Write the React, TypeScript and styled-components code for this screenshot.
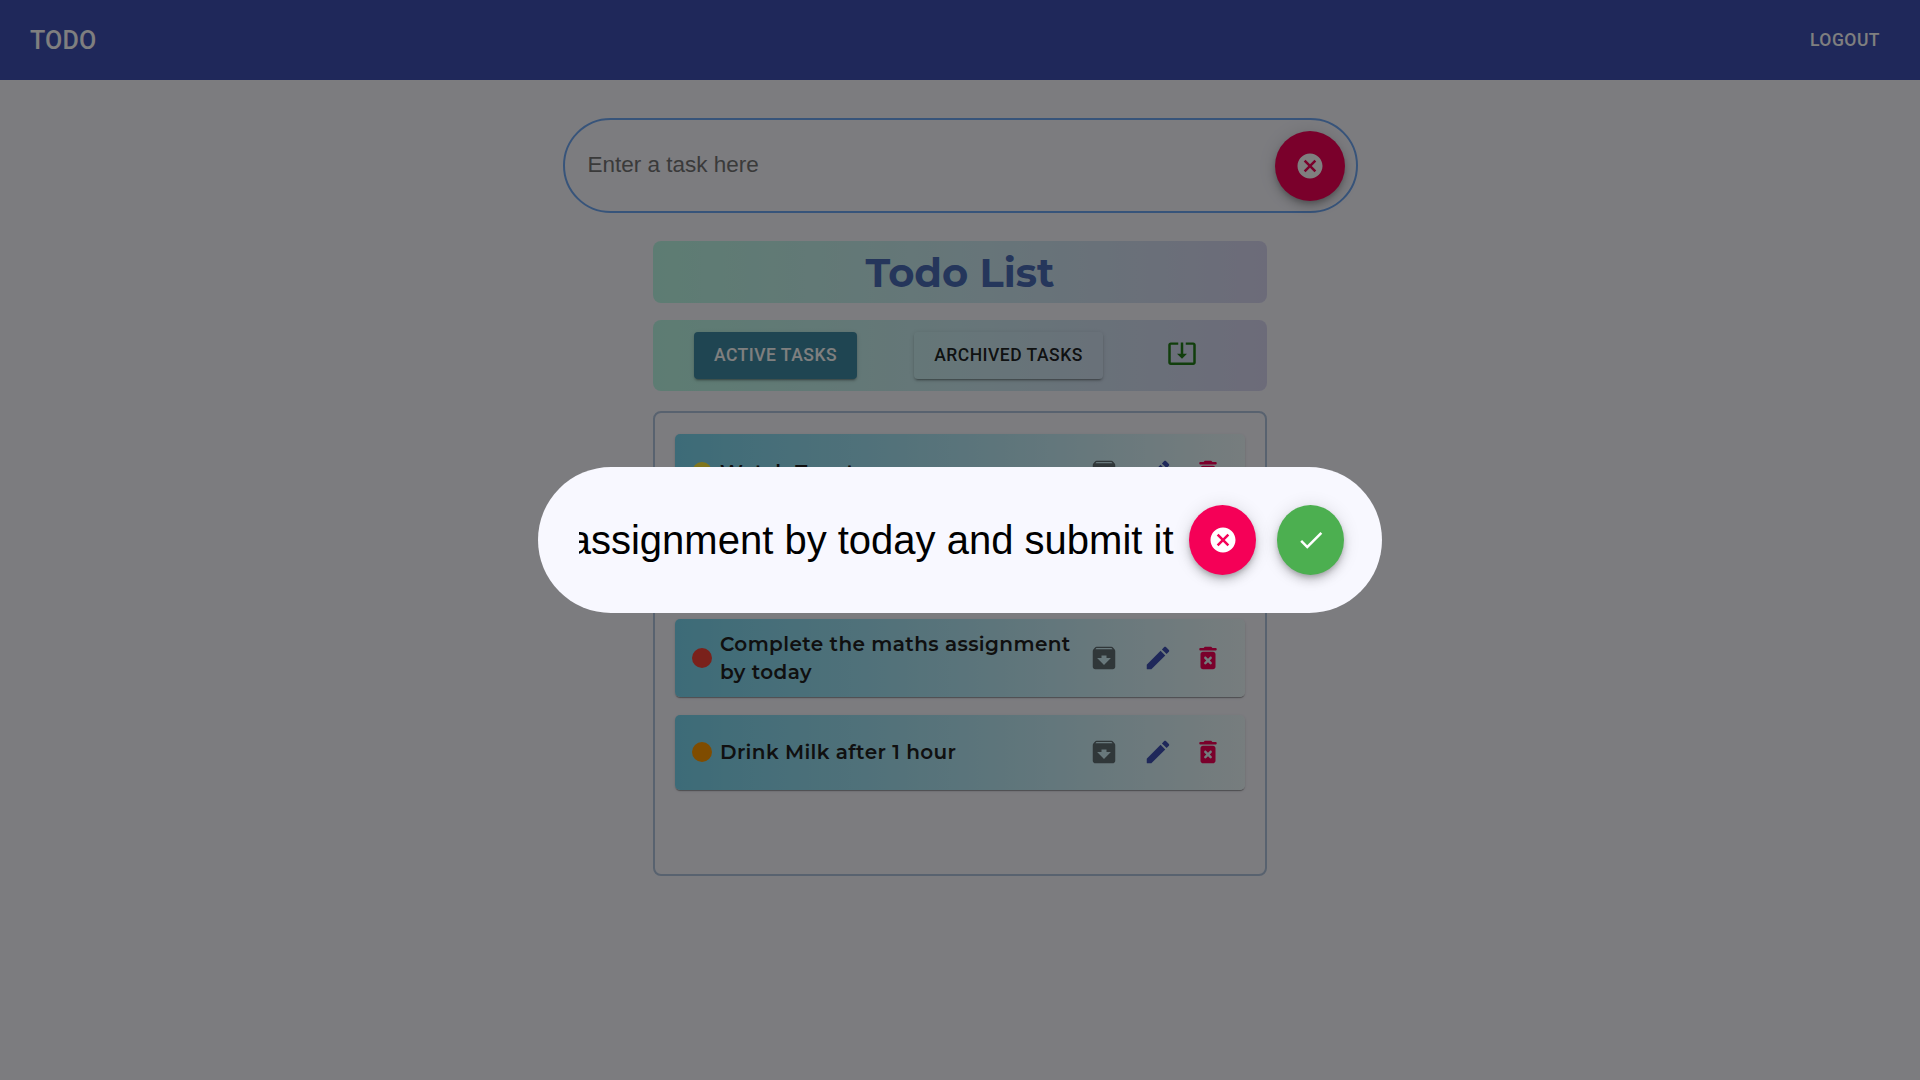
import React from "react";
import styled, { createGlobalStyle, css } from "styled-components";
import { MdArchive, MdCancel, MdCheck, MdSystemUpdateAlt } from "react-icons/md";

const GlobalStyle = createGlobalStyle`
  *, *::before, *::after { box-sizing: border-box; }
  body {
    margin: 0;
    height: 100vh;
    overflow: hidden;
    background: #f8f8ff;
    font-family: Roboto, "Liberation Sans", sans-serif;
  }
`;

const Page = styled.div`
  display: flex;
  flex-direction: column;
  align-items: center;
`;

const AppBar = styled.header`
  width: 100%;
  height: 80px;
  padding: 0 24px 0 30px;
  display: flex;
  align-items: center;
  justify-content: space-between;
  background: #3f51b5;
  color: #fff;
`;

const Brand = styled.h6`
  margin: 0;
  padding-top: 2px;
  font-size: 25px;
  font-weight: 500;
  line-height: 40px;
  letter-spacing: 0.0075em;
`;

const buttonText = css`
  font-family: Roboto, sans-serif;
  font-size: 17.5px;
  font-weight: 500;
  line-height: 30px;
  letter-spacing: 0.02857em;
  text-transform: uppercase;
  white-space: nowrap;
`;

const LogoutButton = styled.button`
  ${buttonText}
  padding: 6px 16px;
  border: 0;
  background: none;
  color: inherit;
`;

const EntryBar = styled.form`
  width: 795px;
  height: 95px;
  margin-top: 38px;
  padding: 0 11px 0 23px;
  display: flex;
  align-items: center;
  border: 2px solid #6fa8f5;
  border-radius: 50px;
`;

const EntryInput = styled.input`
  flex: 1;
  min-width: 0;
  padding: 0 0 2px;
  border: 0;
  outline: 0;
  background: transparent;
  font-family: "Liberation Sans", Arial, sans-serif;
  font-size: 22.5px;
  &::placeholder { color: #757575; }
`;

const Fab = styled.button<{ $color: string; $width?: number }>`
  flex: none;
  width: ${(p) => p.$width ?? 70}px;
  height: 70px;
  padding: 0;
  display: flex;
  align-items: center;
  justify-content: center;
  border: 0;
  border-radius: 50%;
  background: ${(p) => p.$color};
  color: #fff;
  font-size: 30px;
  box-shadow: 0 3px 5px -1px rgba(0, 0, 0, 0.2), 0 6px 10px 0 rgba(0, 0, 0, 0.14),
    0 1px 18px 0 rgba(0, 0, 0, 0.12);
`;

const gradientPanel = css`
  width: 614px;
  border-radius: 8px;
  background: linear-gradient(to right, #bbf9e6, #cdecf2 50%, #d9d7f3);
`;

const TitlePanel = styled.div`
  ${gradientPanel}
  height: 62px;
  margin-top: 28px;
  display: flex;
  align-items: center;
  justify-content: center;
`;

const Title = styled.h1`
  margin: 0;
  font-family: Montserrat, Inter, sans-serif;
  font-size: 40px;
  font-weight: 700;
  color: #4b6cb7;
`;

const TabPanel = styled.nav`
  ${gradientPanel}
  height: 71px;
  margin-top: 17px;
  padding: 0 68px 0 41px;
  display: flex;
  align-items: center;
`;

const Tab = styled.button<{ $active?: boolean }>`
  ${buttonText}
  width: ${(p) => (p.$active ? 163 : 189)}px;
  height: 47px;
  margin-right: ${(p) => (p.$active ? 57 : 64)}px;
  padding: 0 0 2px;
  border: 0;
  border-radius: 4px;
  background: ${(p) => (p.$active ? "#3e8ba5" : "transparent")};
  color: ${(p) => (p.$active ? "#fff" : "rgba(0, 0, 0, 0.87)")};
  box-shadow: 0 3px 1px -2px rgba(0, 0, 0, 0.2), 0 2px 2px 0 rgba(0, 0, 0, 0.14),
    0 1px 5px 0 rgba(0, 0, 0, 0.12);
`;

const ArchiveAll = styled.span`
  display: flex;
  padding-bottom: 6px;
  color: #237d18;
  font-size: 30px;
`;

const List = styled.ul`
  width: 614px;
  height: 465px;
  margin: 20px 0 0;
  padding: 21px 20px;
  display: flex;
  flex-direction: column;
  gap: 17.5px;
  list-style: none;
  border: 2px solid #b0c4de;
  border-radius: 8px;
`;

const Card = styled.li`
  min-height: 75px;
  padding: 11px 22px 11px 17px;
  display: flex;
  align-items: center;
  border-radius: 5px;
  background: linear-gradient(to right, #7ad7f0, #eefafc);
  box-shadow: 0 2px 1px -1px rgba(0, 0, 0, 0.2), 0 1px 1px 0 rgba(0, 0, 0, 0.14),
    0 1px 3px 0 rgba(0, 0, 0, 0.12);
`;

const Dot = styled.span<{ $color: string }>`
  flex: none;
  width: 20px;
  height: 20px;
  margin-right: 8px;
  border-radius: 50%;
  background: ${(p) => p.$color};
`;

const TaskText = styled.span`
  flex: 1;
  font-family: Montserrat, Inter, sans-serif;
  font-size: 20px;
  font-weight: 600;
  line-height: 28px;
  letter-spacing: 0.4px;
  color: #212121;
`;

const Action = styled.span<{ $color: string; $gap: number }>`
  display: flex;
  flex: none;
  margin-left: ${(p) => p.$gap}px;
  color: ${(p) => p.$color};
  font-size: 30px;
`;

const Backdrop = styled.div`
  position: fixed;
  inset: 0;
  display: flex;
  align-items: center;
  justify-content: center;
  background: rgba(0, 0, 0, 0.5);
`;

const Dialog = styled.div`
  width: 844px;
  height: 146px;
  padding: 0 38px 0 41px;
  display: flex;
  align-items: center;
  border-radius: 100px;
  background: #f8f8ff;
`;

const EditField = styled.div`
  flex: 1;
  min-width: 0;
  margin-right: 15.5px;
  display: flex;
  justify-content: flex-end;
  overflow: hidden;
  font-family: "Liberation Sans", Arial, sans-serif;
  font-size: 40px;
  line-height: 46px;
  white-space: nowrap;
  color: #000;
`;

const DialogButtons = styled.div`
  display: flex;
  gap: 21px;
`;

const Glyph = styled.svg`
  width: 1em;
  height: 1em;
  fill: currentColor;
`;

const EditIcon = () => (
  <Glyph viewBox="0 0 24 24">
    <path d="M3 17.46v3.04c0 .28.22.5.5.5h3.04c.13 0 .26-.05.35-.15L17.81 9.94l-3.75-3.75L3.15 17.1c-.1.1-.15.22-.15.36zM20.71 7.04c.39-.39.39-1.02 0-1.41l-2.34-2.34c-.39-.39-1.02-.39-1.41 0l-1.83 1.83 3.75 3.75 1.83-1.83z" />
  </Glyph>
);

const DeleteIcon = () => (
  <Glyph viewBox="0 0 24 24">
    <path d="M6 19c0 1.1.9 2 2 2h8c1.1 0 2-.9 2-2V9c0-1.1-.9-2-2-2H8c-1.1 0-2 .9-2 2v10zm3.17-7.83c.39-.39 1.02-.39 1.41 0L12 12.59l1.42-1.42c.39-.39 1.02-.39 1.41 0 .39.39.39 1.02 0 1.41L13.41 14l1.42 1.42c.39.39.39 1.02 0 1.41-.39.39-1.02.39-1.41 0L12 15.41l-1.42 1.42c-.39.39-1.02.39-1.41 0-.39-.39-.39-1.02 0-1.41L10.59 14l-1.42-1.42c-.39-.38-.39-1.02 0-1.41zM15.5 4l-.71-.71c-.18-.18-.44-.29-.7-.29H9.91c-.26 0-.52.11-.7.29L8.5 4H6c-.55 0-1 .45-1 1s.45 1 1 1h12c.55 0 1-.45 1-1s-.45-1-1-1h-2.5z" />
  </Glyph>
);

const tasks = [
  { text: "Watch Tenet", color: "#ffeb3b" },
  { text: "", color: "#f44336" },
  { text: "Complete the maths assignment by today", color: "#f44336" },
  { text: "Drink Milk after 1 hour", color: "#ff9800" },
];

export default function App() {
  return (
    <>
      <GlobalStyle />
      <Page>
        <AppBar>
          <Brand>TODO</Brand>
          <LogoutButton>Logout</LogoutButton>
        </AppBar>
        <EntryBar>
          <EntryInput placeholder="Enter a task here" />
          <Fab type="button" $color="#f50057">
            <MdCancel />
          </Fab>
        </EntryBar>
        <TitlePanel>
          <Title>Todo List</Title>
        </TitlePanel>
        <TabPanel>
          <Tab $active>Active Tasks</Tab>
          <Tab>Archived Tasks</Tab>
          <ArchiveAll>
            <MdSystemUpdateAlt />
          </ArchiveAll>
        </TabPanel>
        <List>
          {tasks.map((task, i) => (
            <Card key={i}>
              <Dot $color={task.color} />
              <TaskText>{task.text}</TaskText>
              <Action $color="#616e73" $gap={10}>
                <MdArchive />
              </Action>
              <Action $color="#3f51b5" $gap={24}>
                <EditIcon />
              </Action>
              <Action $color="#f50057" $gap={20}>
                <DeleteIcon />
              </Action>
            </Card>
          ))}
        </List>
      </Page>
      <Backdrop>
        <Dialog>
          <EditField>
            <span>Complete the maths assignment by today and submit it</span>
          </EditField>
          <DialogButtons>
            <Fab $color="#f50057" $width={67}>
              <MdCancel />
            </Fab>
            <Fab $color="#4caf50" $width={67}>
              <MdCheck />
            </Fab>
          </DialogButtons>
        </Dialog>
      </Backdrop>
    </>
  );
}
